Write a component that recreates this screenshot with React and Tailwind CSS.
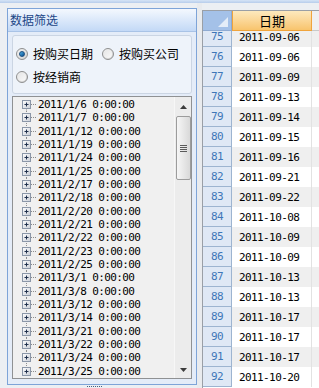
import React from "react";

const treeItems = ["2011/1/6","2011/1/7","2011/1/12","2011/1/19","2011/1/24","2011/1/25","2011/2/17","2011/2/18","2011/2/20","2011/2/21","2011/2/22","2011/2/23","2011/2/25","2011/3/1","2011/3/8","2011/3/12","2011/3/14","2011/3/21","2011/3/22","2011/3/24","2011/3/25"];

const rows = [[75,"2011-09-06"],[76,"2011-09-06"],[77,"2011-09-09"],[78,"2011-09-13"],[79,"2011-09-14"],[80,"2011-09-15"],[81,"2011-09-16"],[82,"2011-09-21"],[83,"2011-09-22"],[84,"2011-10-08"],[85,"2011-10-09"],[86,"2011-10-09"],[87,"2011-10-13"],[88,"2011-10-13"],[89,"2011-10-17"],[90,"2011-10-17"],[91,"2011-10-17"],[92,"2011-10-20"]];

const cjk = { fontFamily: '"Noto Sans CJK SC", "Noto Sans", sans-serif' };
const mono = { fontFamily: '"DejaVu Sans Mono", "Liberation Mono", monospace' };

function Radio({ checked }) {
  return (
    <div className="w-[12px] h-[12px] rounded-full border border-[#8e8f8f] bg-gradient-to-br from-[#f4f4f4] to-[#d2d2d2] flex items-center justify-center shrink-0">
      {checked ? (
        <div className="w-[6px] h-[6px] rounded-full bg-gradient-to-br from-[#4fb3e8] to-[#0b4f8f] border border-[#1b4f80]" />
      ) : (
        <div className="w-[8px] h-[8px] rounded-full bg-gradient-to-br from-[#e6e6e6] to-[#f9f9f9]" />
      )}
    </div>
  );
}

function TreeNode({ first, last }) {
  return (
    <svg width="24" height="13.33" viewBox="0 0 24 13.33" className="shrink-0 block">
      <line x1="13.5" y1={first ? 6.5 : 0} x2="13.5" y2={last ? 6.5 : 13.33} stroke="#8a8a8a" strokeDasharray="1 1" />
      <line x1="18" y1="6.5" x2="23" y2="6.5" stroke="#8a8a8a" strokeDasharray="1 1" />
      <defs>
        <linearGradient id="pb" x1="0" y1="0" x2="1" y2="1">
          <stop offset="0" stopColor="#ffffff" />
          <stop offset="1" stopColor="#c9ced6" />
        </linearGradient>
      </defs>
      <rect x="9.5" y="2.5" width="8" height="8" fill="url(#pb)" stroke="#8b97a8" />
      <line x1="11.5" y1="6.5" x2="15.5" y2="6.5" stroke="#1f2f4a" />
      <line x1="13.5" y1="4.5" x2="13.5" y2="8.5" stroke="#1f2f4a" />
    </svg>
  );
}

export default function App() {
  return (
    <div className="w-[319px] h-[388px] overflow-hidden bg-[#eceff3] flex flex-col">
      <div className="h-[3px] bg-gradient-to-b from-[#d6e4f6] to-[#b7cdeb] shrink-0" />
      <div className="flex flex-1 min-h-0">
        {/* left area */}
        <div className="w-[197px] shrink-0 pl-[7px] pt-[5px] flex flex-col">
          <div className="w-[190px] h-[377px] border border-[#7ea4d8] flex flex-col bg-[#e2eaf6]">
            <div className="h-[23px] shrink-0 bg-gradient-to-b from-[#f4f8fe] to-[#c3d9f6] border-b border-[#a9c3e6] flex items-center pl-[2px]">
              <span className="text-[12px] leading-none text-[#1d4787]" style={cjk}>数据筛选</span>
            </div>
            <div className="flex-1 flex flex-col pl-[4px] pr-[4px] pt-[3px] pb-[4px] bg-[#e4ecf8]">
              <div className="w-[180px] h-[59px] shrink-0 rounded-[3px] border border-[#cbd5e3] bg-[#eef3fa] flex flex-col pl-[3px] pt-[12px] gap-[11px]">
                <div className="flex items-center h-[12px]">
                  <Radio checked />
                  <span className="ml-[5px] text-[12px] leading-none text-black" style={cjk}>按购买日期</span>
                  <div className="ml-[9px]"><Radio /></div>
                  <span className="ml-[5px] text-[12px] leading-none text-black" style={cjk}>按购买公司</span>
                </div>
                <div className="flex items-center h-[12px]">
                  <Radio />
                  <span className="ml-[5px] text-[12px] leading-none text-black" style={cjk}>按经销商</span>
                </div>
              </div>
              <div className="mt-[2px] w-[180px] h-[283px] shrink-0 border border-[#8f9193] bg-[#f0f0f0] flex">
                <div className="flex-1 flex flex-col pt-[1px] overflow-hidden">
                  {treeItems.map((t, i) => (
                    <div key={t} className="flex items-center h-[13.33px]">
                      <TreeNode first={i === 0} last={i === treeItems.length - 1} />
                      <span className="text-[11px] leading-none text-black whitespace-nowrap tracking-[-0.6px] ml-[1px]" style={mono}>{t} 0:00:00</span>
                    </div>
                  ))}
                </div>
                <div className="w-[17px] shrink-0 bg-[#ececec] border-l border-[#f7f7f7] flex flex-col items-center">
                  <div className="h-[19px] w-full flex items-center justify-center">
                    <svg width="7" height="4" viewBox="0 0 7 4"><polygon points="3.5,0 7,4 0,4" fill="#3c3c3c" /></svg>
                  </div>
                  <div className="w-[15px] h-[64px] rounded-[2px] border border-[#9c9c9c] bg-gradient-to-r from-[#f6f6f6] to-[#d9d9d9] flex flex-col items-center justify-center gap-[1px]">
                    <div className="w-[7px] h-[1px] bg-[#5a5a5a]" />
                    <div className="w-[7px] h-[1px] bg-[#5a5a5a]" />
                    <div className="w-[7px] h-[1px] bg-[#5a5a5a]" />
                    <div className="w-[7px] h-[1px] bg-[#5a5a5a]" />
                  </div>
                  <div className="flex-1" />
                  <div className="h-[17px] w-full flex items-center justify-center">
                    <svg width="7" height="4" viewBox="0 0 7 4"><polygon points="0,0 7,0 3.5,4" fill="#3c3c3c" /></svg>
                  </div>
                </div>
              </div>
            </div>
          </div>
          <div className="flex justify-start pl-[80px] pt-[1px] gap-[1px]">
            {[0,1,2,3,4,5,6,7].map((d) => (
              <div key={d} className="w-[1px] h-[1px] bg-[#45607f]" />
            ))}
          </div>
        </div>
        {/* splitter */}
        <div className="w-[5px] shrink-0 bg-[#e9ebee]" />
        {/* grid */}
        <div className="flex-1 min-w-0 pt-[7px] flex flex-col">
          <div className="flex-1 border-l border-t border-[#9a9fa6] flex flex-col bg-white overflow-hidden">
            <div className="h-[20px] shrink-0 flex relative z-10">
              <div className="w-[29px] shrink-0 bg-[#a4c1e8] border-r border-b border-[#8fabd2] flex items-end justify-end pr-[3px] pb-[3px]">
                <svg width="10" height="10" viewBox="0 0 10 10"><polygon points="10,0 10,10 0,10" fill="#e4edf8" /></svg>
              </div>
              <div className="w-[80px] shrink-0 bg-gradient-to-b from-[#fde9bd] to-[#f8c46c] border border-t-0 border-[#f0a43c] flex items-center justify-center">
                <span className="text-[13px] leading-none text-black" style={cjk}>日期</span>
              </div>
              <div className="flex-1 bg-[#f0f0f0] border-b border-[#c9c9c9]" />
            </div>
            <div className="flex-1 overflow-hidden">
              <div className="-mt-[4px] flex flex-col">
                {rows.map(([n, d]) => {
                  const bg = n % 2 === 1 ? "bg-[#efefef]" : "bg-white";
                  return (
                    <div key={n} className="h-[20px] flex shrink-0">
                      <div className="w-[29px] shrink-0 bg-[#dfe8f5] border-r border-b border-[#9db4d0] flex items-center justify-center">
                        <span className="text-[11px] leading-none text-[#3e77b8] tracking-[-0.6px]" style={mono}>{n}</span>
                      </div>
                      <div className={`w-[80px] shrink-0 ${bg} border-r border-[#e2e2e2] flex items-center pl-[7px]`}>
                        <span className="text-[11px] leading-none text-black tracking-[-0.6px]" style={mono}>{d}</span>
                      </div>
                      <div className={`flex-1 ${bg}`} />
                    </div>
                  );
                })}
              </div>
            </div>
          </div>
        </div>
      </div>
    </div>
  );
}
